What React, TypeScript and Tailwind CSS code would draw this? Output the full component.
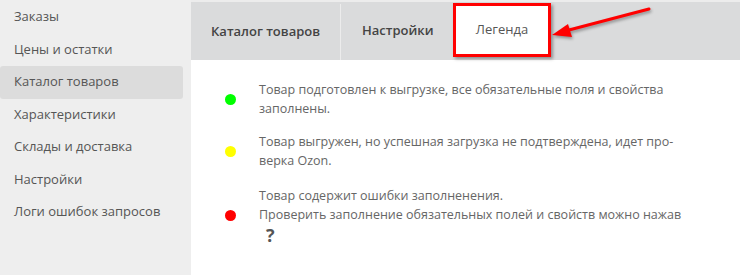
import React from "react";

const menu = [
  "Заказы",
  "Цены и остатки",
  "Каталог товаров",
  "Характеристики",
  "Склады и доставка",
  "Настройки",
  "Логи ошибок запросов",
];

export default function App() {
  return (
    <div
      className="flex w-[740px] h-[275px] overflow-hidden bg-white text-[13px]"
      style={{ fontFamily: '"Open Sans", "Noto Sans", sans-serif' }}
    >
      {/* левое меню */}
      <div className="w-[191px] shrink-0 bg-[#eeeeee] pt-[1px] pr-[8px]">
        {menu.map((item) => (
          <div
            key={item}
            className={
              "h-[32.5px] flex items-center pl-[14px] pb-[1px] text-[13px] text-[#555] rounded-[3px] " +
              (item === "Каталог товаров" ? "bg-[#dcdcdc]" : "")
            }
          >
            {item}
          </div>
        ))}
      </div>

      {/* основная часть */}
      <div className="flex-1 flex flex-col">
        <div className="h-[2px] bg-[#ececec]" />
        <div className="relative flex h-[58px] bg-[#dadbdc]">
          <div className="w-[150px] flex items-center pl-[20px] font-semibold text-[#444] border-r border-[#ececec] mt-[2px]">
            Каталог товаров
          </div>
          <div className="w-[112px] flex items-center pl-[21px] font-semibold text-[#444]">
            Настройки
          </div>
          <div className="w-[98px] mt-[1px] mb-[3px] flex items-center justify-center bg-white border-[3px] border-[#ff0000] text-[#555] shadow-[2px_2px_3px_rgba(0,0,0,0.35)]">
            Легенда
          </div>
          {/* стрелка */}
          <svg
            className="absolute left-[358px] top-[2px]"
            width="110"
            height="40"
            viewBox="0 0 110 40"
          >
            <g style={{ filter: "drop-shadow(1px 2px 1.5px rgba(0,0,0,0.35))" }}>
              <line x1="100" y1="5" x2="20" y2="26" stroke="#ff0000" strokeWidth="3" strokeLinecap="round" />
              <polygon points="3,31 19,20 23,33" fill="#ff0000" />
            </g>
          </svg>
        </div>

        <div className="flex flex-col gap-[14px] pt-[20px] pl-[34px] text-[12.5px] text-[#666] leading-[19px]">
          <div className="flex items-center">
            <span className="w-[11px] h-[11px] rounded-full bg-[#00ff00] shrink-0" />
            <div className="ml-[23px]">
              Товар подготовлен к выгрузке, все обязательные поля и свойства
              <br />
              заполнены.
            </div>
          </div>
          <div className="flex items-center">
            <span className="w-[11px] h-[11px] rounded-full bg-[#ffff00] shrink-0" />
            <div className="ml-[23px]">
              Товар выгружен, но успешная загрузка не подтверждена, идет про-
              <br />
              верка Ozon.
            </div>
          </div>
          <div className="flex items-center mt-[2px]">
            <span className="w-[11px] h-[11px] rounded-full bg-[#ff0000] shrink-0" />
            <div className="ml-[23px]">
              Товар содержит ошибки заполненения.
              <br />
              Проверить заполнение обязательных полей и свойств можно нажав
              <div className="pl-[7px] pt-[1px] text-[18px] font-bold text-[#555] leading-[20px]">?</div>
            </div>
          </div>
        </div>
      </div>
    </div>
  );
}
